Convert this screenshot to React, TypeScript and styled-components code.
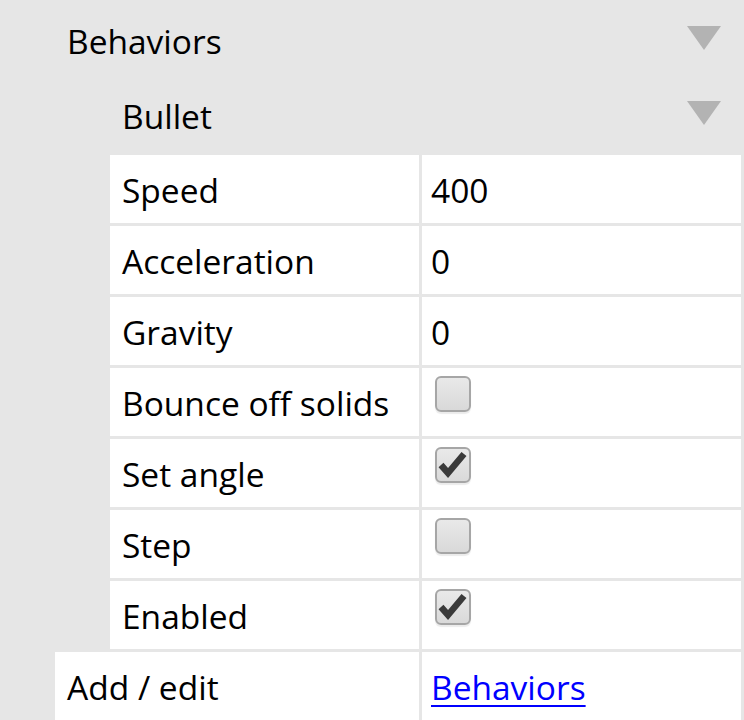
import React from 'react'
import styled, { createGlobalStyle } from 'styled-components'

const GlobalStyle = createGlobalStyle`
  body {
    margin: 0;
    background: #e6e6e6;
    font-family: 'Open Sans', 'Noto Sans', sans-serif;
    color: #000;
  }
`

const Panel = styled.div`
  display: flex;
  flex-direction: column;
  padding-top: 2px;
  width: 744px;
  height: 720px;
  overflow: hidden;
  font-size: 33.5px;
`

const GroupHeader = styled.div<{ indent: number }>`
  display: flex;
  align-items: center;
  justify-content: space-between;
  height: 75px;
  padding: 2px 23px 0 ${({ indent }) => indent + 12}px;
  box-sizing: border-box;
`

const Arrow = styled.span`
  width: 0;
  height: 0;
  margin-bottom: 5px;
  border-left: 17px solid transparent;
  border-right: 17px solid transparent;
  border-top: 24px solid #b3b3b3;
`

const PropList = styled.div`
  display: flex;
  flex-direction: column;
  gap: 3px;
  padding: 3px 3px 0 0;
`

const PropRow = styled.div<{ indent: number }>`
  display: grid;
  grid-template-columns: ${({ indent }) => 419 - indent}px 1fr;
  column-gap: 3px;
  height: 68px;
  margin-left: ${({ indent }) => indent}px;
`

const Label = styled.div`
  display: flex;
  align-items: center;
  padding: 2px 0 0 12px;
  background: #fff;
  white-space: nowrap;
`

const Value = styled.div<{ check?: boolean }>`
  display: flex;
  align-items: ${({ check }) => (check ? 'flex-start' : 'center')};
  padding: ${({ check }) => (check ? '8px 0 0 13px' : '2px 0 0 9px')};
  background: #fff;
`

const Box = styled.span`
  box-sizing: border-box;
  display: block;
  width: 36px;
  height: 36px;
  border: 2px solid #a6a6a6;
  border-radius: 6px;
  background: linear-gradient(#e9e9e9, #d9d9d9);
  box-shadow: 0 2px 1px rgba(0, 0, 0, 0.08);
  position: relative;
  & > svg {
    position: absolute;
    left: -2px;
    top: -2px;
  }
`

const Link = styled.a`
  color: #0000ff;
  text-decoration: underline;
  text-decoration-thickness: 2px;
  text-underline-offset: 5px;
`

const Checkbox = ({ checked }: { checked: boolean }) => (
  <Box>
    {checked && (
      <svg width="36" height="36" viewBox="0 0 36 36">
        <path d="M6 18 L13 26 L29 7" fill="none" stroke="#3a3a3a" strokeWidth="6.5" strokeLinejoin="miter" />
      </svg>
    )}
  </Box>
)

type Prop = { label: string; value?: string; checked?: boolean }

const props: Prop[] = [
  { label: 'Speed', value: '400' },
  { label: 'Acceleration', value: '0' },
  { label: 'Gravity', value: '0' },
  { label: 'Bounce off solids', checked: false },
  { label: 'Set angle', checked: true },
  { label: 'Step', checked: false },
  { label: 'Enabled', checked: true },
]

export default function App() {
  return (
    <Panel>
      <GlobalStyle />
      <GroupHeader indent={55}>
        Behaviors
        <Arrow />
      </GroupHeader>
      <GroupHeader indent={110}>
        Bullet
        <Arrow />
      </GroupHeader>
      <PropList>
        {props.map((p) => (
          <PropRow key={p.label} indent={110}>
            <Label>{p.label}</Label>
            {p.value !== undefined ? (
              <Value>{p.value}</Value>
            ) : (
              <Value check>
                <Checkbox checked={!!p.checked} />
              </Value>
            )}
          </PropRow>
        ))}
        <PropRow indent={55}>
          <Label>Add / edit</Label>
          <Value>
            <Link href="#">Behaviors</Link>
          </Value>
        </PropRow>
      </PropList>
    </Panel>
  )
}
